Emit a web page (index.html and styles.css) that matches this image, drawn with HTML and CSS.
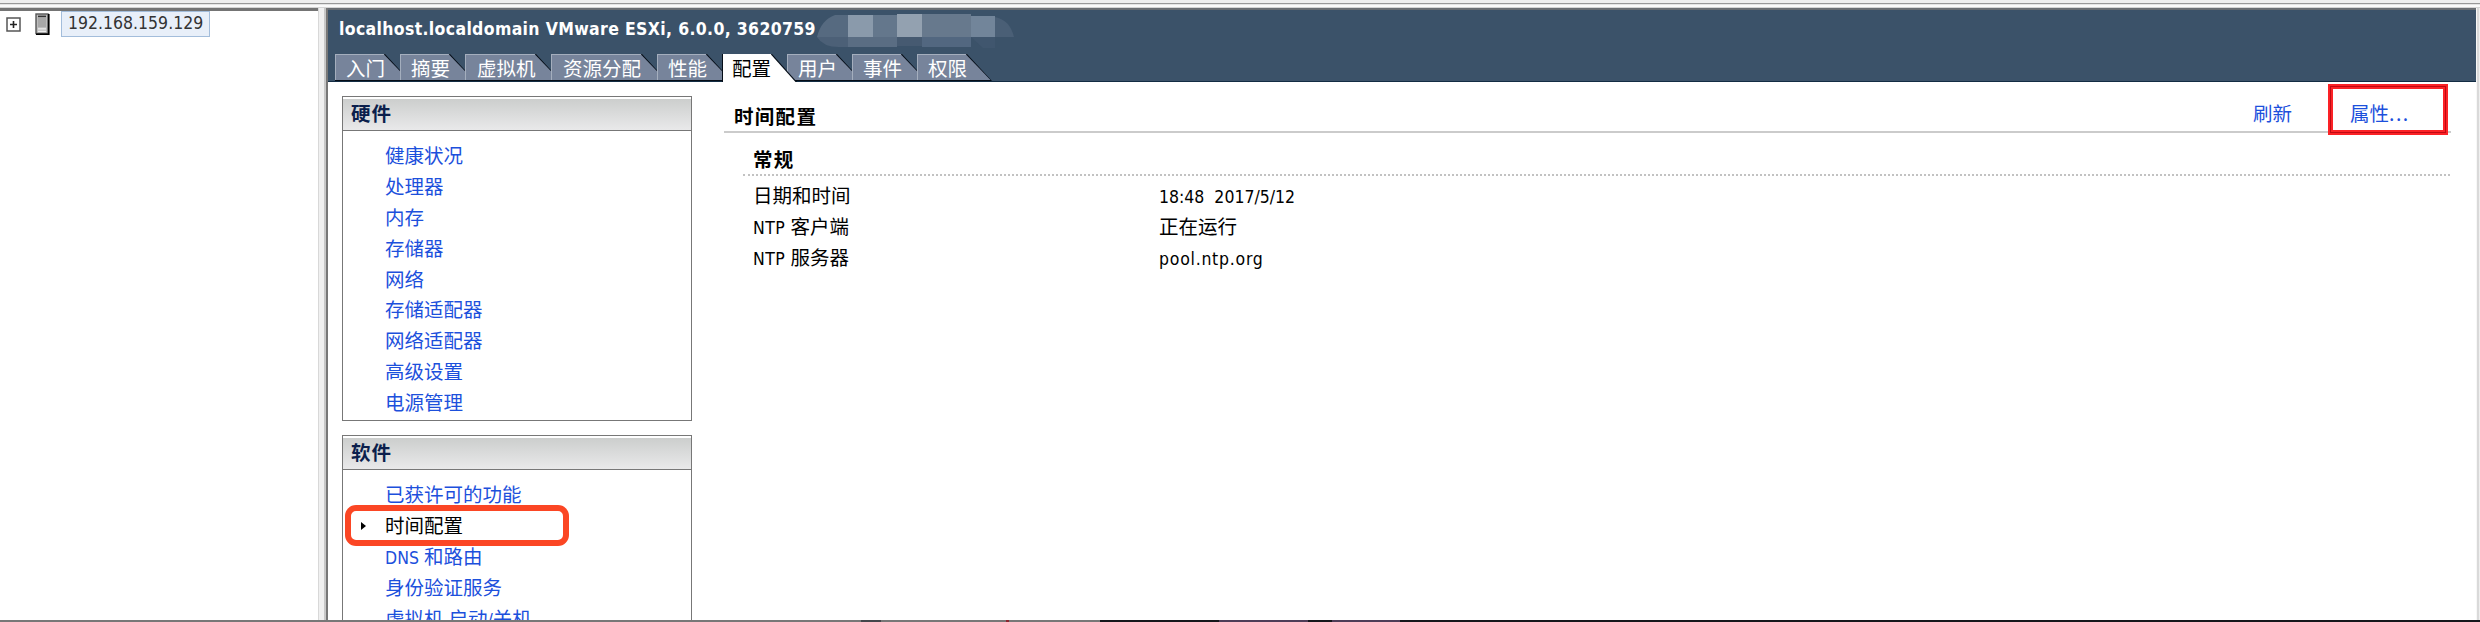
FILE: index.html
```html
<!DOCTYPE html>
<html lang="zh-CN">
<head>
<meta charset="utf-8">
<title>localhost.localdomain VMware ESXi</title>
<link rel="stylesheet" href="styles.css">
</head>
<body>
<div class="window">
  <div class="toolbar-edge"></div>
  <div class="workspace">
    <aside class="tree">
      <div class="tree-row">
        <svg class="expander" width="15" height="15" viewBox="0 0 15 15"><rect x="1" y="1" width="13" height="13" fill="#fff" stroke="#555" stroke-width="1.5"/><path d="M4 7.5h7M7.5 4v7" stroke="#222" stroke-width="1.6"/></svg>
        <svg class="host" width="15" height="22" viewBox="0 0 15 22"><rect x="1" y="1" width="12" height="19.5" fill="#bdbdbd" stroke="#555" stroke-width="1.4"/><path d="M13.8 1v20.2H1" fill="none" stroke="#000" stroke-width="1.6"/><path d="M3 3.4h8" stroke="#333" stroke-width="1.6"/><path d="M3 15.8h8M3 18.3h8" stroke="#eee" stroke-width="1.2"/><rect x="3" y="5" width="8" height="9" fill="#a8a8a8"/></svg>
        <span class="node">192.168.159.129</span>
      </div>
    </aside>
    <div class="splitter"></div>
    <main class="host-view">
      <header class="banner">
        <div class="title-row">
          <h1>localhost.localdomain VMware ESXi, 6.0.0, 3620759</h1>
          <svg class="mosaic" width="198" height="34" viewBox="0 0 198 34">
            <path d="M18 1h42v22H0Q4 6 18 1z" fill="#566a80"/><path d="M0 23h79v10H22Q6 33 0 23z" fill="#4c6077"/>
            <rect x="31" y="1" width="25" height="22" fill="#8a9aab"/><rect x="56" y="1" width="24" height="22" fill="#64778c"/>
            <rect x="31" y="23" width="49" height="10" fill="#5a6d83"/><rect x="80" y="0" width="25" height="23" fill="#93a1b0"/>
            <rect x="80" y="23" width="25" height="9" fill="#465a71"/><rect x="105" y="0" width="49" height="23" fill="#67798d"/>
            <rect x="105" y="23" width="49" height="10" fill="#526780"/><rect x="154" y="2" width="24" height="21" fill="#72859a"/>
            <path d="M154 23h24v11h-12z" fill="#40566e"/><path d="M178 3q15 3 19 20h-19z" fill="#4a5f76"/>
          </svg>
        </div>
        <nav class="tabs">
          <a class="tab">入门</a><a class="tab">摘要</a><a class="tab w3">虚拟机</a><a class="tab w4">资源分配</a><a class="tab">性能</a><a class="tab active">配置</a><a class="tab">用户</a><a class="tab">事件</a><a class="tab">权限</a>
        </nav>
      </header>
      <div class="content">
        <div class="side">
          <section class="panel">
            <h2>硬件</h2>
            <ul><li>健康状况</li><li>处理器</li><li>内存</li><li>存储器</li><li>网络</li><li>存储适配器</li><li>网络适配器</li><li>高级设置</li><li>电源管理</li></ul>
          </section>
          <section class="panel">
            <h2>软件</h2>
            <ul><li>已获许可的功能</li><li class="current">时间配置</li><li><span class="lat">DNS </span>和路由</li><li>身份验证服务</li><li>虚拟机<span class="lat"> </span>启动<span class="lat">/</span>关机</li></ul>
          </section>
        </div>
        <section class="detail">
          <div class="detail-head">
            <h3>时间配置</h3>
            <div class="actions"><a>刷新</a><a class="marked">属性<span class="dots">...</span></a></div>
          </div>
          <div class="group">
            <h4>常规</h4>
            <dl>
              <dt>日期和时间</dt><dd><span class="lat">18:48&nbsp; 2017/5/12</span></dd>
              <dt><span class="lat ntp">NTP </span>客户端</dt><dd>正在运行</dd>
              <dt><span class="lat ntp">NTP </span>服务器</dt><dd><span class="lat server">pool.ntp.org</span></dd>
            </dl>
          </div>
        </section>
      </div>
    </main>
    <div class="right-edge"></div>
  </div>
  <div class="bottom-edge"></div>
</div>
</body>
</html>
```
FILE: styles.css
```css
*, *::before, *::after { box-sizing: border-box; margin: 0; padding: 0; }
body {
  width: 2480px; height: 622px; overflow: hidden; background: #fff; color: #111;
  font: 400 19.5px/30.9px "Noto Sans CJK SC", sans-serif;
}
.window { display: flex; flex-direction: column; height: 622px; }
.toolbar-edge {
  flex: none; height: 8px;
  background: linear-gradient(#eee 0 3px, #989898 3px 4px, #e4e4e4 4px 5px, #fafafa 5px 7px, #d4d4d4 7px 8px);
}
.workspace { flex: 1; display: flex; min-height: 0; }
.tree { width: 318px; border-top: 3px solid #747474; }
.tree-row { display: flex; align-items: flex-start; }
.expander { margin: 6px 0 0 6px; }
.host { margin: 2px 0 0 14px; }
.node {
  margin-left: 11px; width: 149px; height: 26px; padding-left: 6px;
  font: 400 17.5px/22px "DejaVu Sans Condensed", sans-serif; color: #333;
  border: 1.5px solid #a3bddb; background: #e8eff9;
}
.splitter { width: 8px; background: linear-gradient(90deg, #d8d8d8 0 1px, #f0f0f0 1px 6px, #c8c8c8 6px); }
.host-view { flex: 1; display: flex; flex-direction: column; min-width: 0; border-left: 2px solid #777; }
.right-edge { width: 4px; background: linear-gradient(90deg, #f7f7f7 0 1px, #d9d9d9 1px 3px, #efefef 3px); }
.banner {
  flex: none; height: 74px; padding-left: 7px; display: flex; flex-direction: column; justify-content: space-between;
  background: #3b5269; border-top: 2px solid #6a6e73; border-bottom: 1px solid #122c43;
}
.title-row { display: flex; height: 38px; padding: 4px 0 0 4px; }
h1 {
  width: 478px; white-space: nowrap; color: #fff; letter-spacing: .34px;
  font: 700 17.5px/30px "DejaVu Sans Condensed", sans-serif;
}
.tabs { display: flex; height: 27px; }
.tab {
  position: relative; isolation: isolate;
  width: 75px; height: 27px; margin-right: -10px; padding-left: 11px;
  color: #fff; line-height: 27px; background: #050d17;
  clip-path: polygon(0 0, calc(100% - 25px) 0, 100% 100%, 0 100%);
}
.tab::before {
  content: ""; position: absolute; z-index: -1; inset: 0 1.5px 1px 0; background: #77849b;
  border-top: 1px solid #a4aebd; border-left: 1px solid #a4aebd;
  clip-path: polygon(0 0, calc(100% - 25px) 0, 100% 100%, 0 100%);
}
.w3 { width: 96px; padding-left: 12px; }
.w4 { width: 116px; padding-left: 12px; }
.active { color: #000; height: 28px; z-index: 1; padding-left: 10px; }
.active::before { background: #fff; border-color: #fff; bottom: 0; left: 1px; }
.content { flex: 1; display: flex; min-height: 0; overflow: hidden; }
.side { width: 364px; padding: 14px 0 0 14px; }
.panel { height: 325px; margin-bottom: 14px; border: 1px solid #777; }
h2 {
  height: 34px; padding-left: 8px; border-bottom: 1px solid #777; color: #0b1f4c;
  font-size: 19.5px; line-height: 32px; letter-spacing: 1px; font-weight: 700;
  background: linear-gradient(#fff 0 2px, #cccecd 2px, #e9e9ea);
}
.panel ul { list-style: none; padding: 9px 0 0 42px; }
.panel li { color: #1c50dc; white-space: nowrap; height: 30.9px; }
.lat { font: 400 17.5px/1 "DejaVu Sans Condensed", sans-serif; }
.ntp { letter-spacing: .4px; }
.server { letter-spacing: .75px; }
.panel .current { color: #000; position: relative; }
.current::before {
  content: ""; position: absolute; left: -24px; top: 12px;
  border-left: 5px solid #000; border-top: 4px solid transparent; border-bottom: 4px solid transparent;
}
.current::after {
  content: ""; position: absolute; left: -40px; top: -5px; width: 224px; height: 41px;
  border: 6px solid #fb4624; border-radius: 11px;
}
.detail { flex: 1; padding: 0 25px 0 32px; }
.detail-head { display: flex; justify-content: space-between; height: 51px; border-bottom: 2px solid #cbcbcb; padding-left: 10px; }
h3, h4 { font-size: 19.5px; font-weight: 700; letter-spacing: 1.3px; color: #000; }
h3 { padding-top: 19px; }
.actions { display: flex; color: #1c50dc; padding-right: 3px; }
.actions a { padding-top: 16px; }
.actions .marked {
  margin: 2px 0 0 36px; width: 120px; height: 51px; padding: 9px 0 0 17px;
  border: 5px double #fb2226; background: linear-gradient(#fff, #fff) padding-box, #c00a12 border-box;
}
.dots { letter-spacing: 1.5px; }
.group { padding: 11px 1px 0 19px; }
h4 { height: 32px; padding-left: 10px; border-bottom: 2px dotted #c2c2c2; }
dl { display: grid; grid-template-columns: 406px 1fr; grid-auto-rows: 30.9px; padding: 4px 0 0 10px; color: #000; }
.bottom-edge {
  flex: none; height: 2px;
  background: linear-gradient(90deg, #777 0 861px, #44464b 861px 881px, #777 881px 1006px, #8b2630 1006px 1009px, #777 1009px 1100px, #15171b 1100px 1219px, #4e3d58 1219px 1308px, #15171b 1308px 1332px, #4e3d58 1332px 1400px, #15171b 1400px);
}
```
